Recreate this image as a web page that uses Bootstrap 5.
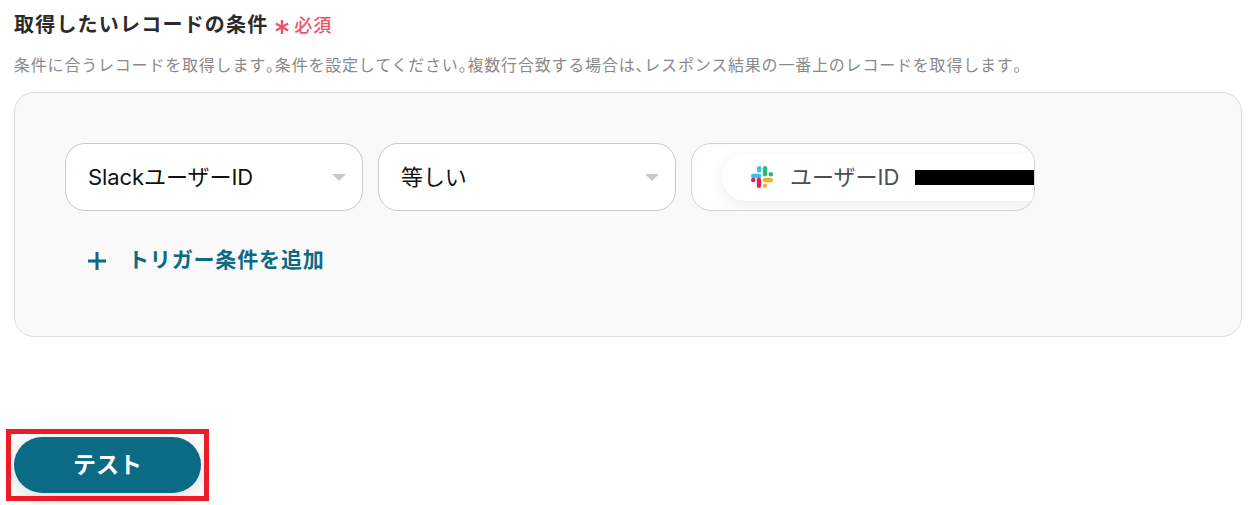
<!DOCTYPE html>
<html lang="ja">
<head>
<meta charset="utf-8">
<title>取得したいレコードの条件</title>
<link rel="stylesheet" href="https://cdn.jsdelivr.net/npm/bootstrap@5.3.0/dist/css/bootstrap.min.css">
<style>
html,body{height:505px;overflow:hidden;background:#fff;}
body{font-family:Inter,"Noto Sans CJK JP",sans-serif;color:#222;padding:0 13px 0 14px;}
.sec-title{font-size:20px;font-weight:700;line-height:28px;letter-spacing:.06em;color:#2b2b2b;margin:11px 0 0;height:28px;white-space:nowrap;}
.req-mark{color:#f34f63;font-size:18px;font-weight:500;letter-spacing:.05em;}
.req-star{width:16px;height:16px;margin:0 4px 0 0;vertical-align:-3px;}
.hint-text{font-size:16px;line-height:24px;color:#8a8a8a;margin:14px 0 0;height:24px;letter-spacing:.05em;white-space:nowrap;}
.punct{font-feature-settings:"halt";}
.cond-panel{background:#f9f9f9;border:1px solid #dcdde3;border-radius:20px;height:245px;margin-top:15px;padding:50px 50px 0;}
.cond-row{gap:15px;}
.fake-select{width:298px;height:68px;background:#fff;border:1px solid #c8c8c8;border-radius:20px;padding:0 22px;font-size:22px;color:#111;letter-spacing:-.003em;}
.sel-caret{width:0;height:0;border-left:7.5px solid transparent;border-right:7.5px solid transparent;border-top:7px solid #c9c9c9;margin-right:-6px;}
.value-box{width:344px;height:68px;background:#fff;border:1px solid #ced3dc;border-radius:20px;overflow:hidden;padding:9px 0 0 30px;box-shadow:inset 0 0 12px rgba(0,0,0,.02);}
.value-chip{height:48px;width:400px;background:#fff;border-radius:24px;padding-left:28px;box-shadow:0 4px 14px rgba(0,0,0,.07);font-size:22px;color:#4a4f57;white-space:nowrap;flex:none;}
.chip-icon{width:24px;height:24px;margin-right:16px;flex:none;}
.redact{width:200px;height:15px;background:#000;margin-left:16px;flex:none;}
.add-link{color:#0b6a84;font-size:21px;font-weight:700;letter-spacing:.04em;margin:34px 0 0 21px;height:30px;}
.add-plus{width:20px;height:20px;margin-right:21px;margin-top:2px;margin-left:1px;}
.test-wrap{position:relative;margin:92px 0 0 -8px;width:203px;height:72px;padding:8px 0 0 8px;background:#fff;}
.test-wrap::after{content:"";position:absolute;inset:0;border:5px solid #ed1c24;pointer-events:none;}
.test-btn{display:block;width:187px;height:56px;margin:0;background:#0b6a84;color:#fff;border:0;border-radius:28px;font-size:23px;font-weight:700;line-height:54px;padding:0;text-align:center;box-shadow:0 4px 20px rgba(0,0,0,.16);}
.test-btn:hover{background:#0b6a84;color:#fff;}
</style>
</head>
<body>
<h2 class="sec-title">取得したいレコードの条件 <span class="req-mark"><svg class="req-star" viewBox="0 0 15 15"><path d="M7.5 1v13M1.8 4.2l11.4 6.6M13.2 4.2L1.8 10.8" stroke="#f34f63" stroke-width="2.2" fill="none"/></svg>必須</span></h2>
<p class="hint-text">条件に合うレコードを取得します<span class="punct">。</span>条件を設定してください<span class="punct">。</span>複数行合致する場合は<span class="punct">、</span>レスポンス結果の一番上のレコードを取得します<span class="punct">。</span></p>
<div class="cond-panel">
  <div class="d-flex cond-row">
    <div class="fake-select d-flex align-items-center justify-content-between"><span>SlackユーザーID</span><span class="sel-caret"></span></div>
    <div class="fake-select d-flex align-items-center justify-content-between"><span>等しい</span><span class="sel-caret"></span></div>
    <div class="value-box d-flex align-items-start">
      <div class="value-chip d-flex align-items-center">
        <svg class="chip-icon" viewBox="0 0 24 24">
          <g fill="#36c5f0"><rect x="1" y="8.8" width="10.4" height="4.4" rx="2.2"/><rect x="7" y="1" width="4.4" height="6.6" rx="2.2"/></g>
          <g fill="#2eb67d"><rect x="12.8" y="1" width="4.4" height="10.4" rx="2.2"/><rect x="18.6" y="7" width="4.4" height="4.4" rx="2.2"/></g>
          <g fill="#ecb22e"><rect x="12.8" y="12.8" width="10.2" height="4.4" rx="2.2"/><rect x="12.8" y="18.6" width="4.4" height="4.4" rx="2.2"/></g>
          <g fill="#e01e5a"><rect x="6.8" y="12.8" width="4.4" height="10.2" rx="2.2"/><rect x="1" y="12.8" width="4.4" height="4.4" rx="2.2"/></g>
        </svg>
        <span>ユーザーID</span><span class="redact"></span>
      </div>
    </div>
  </div>
  <div class="add-link d-flex align-items-center">
    <svg class="add-plus" viewBox="0 0 20 20"><path d="M10 1v18M1 10h18" stroke="#0b6a84" stroke-width="3" fill="none"/></svg>
    <span>トリガー条件を追加</span>
  </div>
</div>
<div class="test-wrap"><button type="button" class="btn test-btn">テスト</button></div>
</body>
</html>
